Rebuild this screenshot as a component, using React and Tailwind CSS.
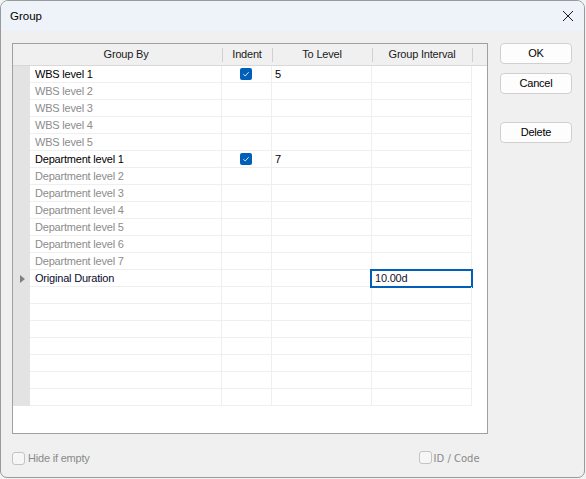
import React from "react";

const rows = [
  { name: "WBS level 1", on: true, indent: true, level: "5" },
  { name: "WBS level 2" },
  { name: "WBS level 3" },
  { name: "WBS level 4" },
  { name: "WBS level 5" },
  { name: "Department level 1", on: true, indent: true, level: "7" },
  { name: "Department level 2" },
  { name: "Department level 3" },
  { name: "Department level 4" },
  { name: "Department level 5" },
  { name: "Department level 6" },
  { name: "Department level 7" },
  { name: "Original Duration", on: true, current: true, interval: "10.00d" },
];
while (rows.length < 20) rows.push({ empty: true });

function Check() {
  return (
    <div className="w-[12px] h-[12px] rounded-[2px] bg-[#005fb8] flex items-center justify-center">
      <svg width="8" height="8" viewBox="0 0 8 8">
        <path d="M1.3 4.2 L3.2 6 L6.7 2.2" fill="none" stroke="#d4e4f4" strokeWidth="1" />
      </svg>
    </div>
  );
}

function Header({ w, children }) {
  return (
    <div className={`${w} relative flex items-center justify-center text-[#1a1a1a]`}>
      {children}
      <div className="absolute right-[-1px] top-[4px] h-[14px] w-px bg-[#d0d0d0]" />
    </div>
  );
}

export default function App() {
  return (
    <div className="w-[586px] h-[479px] bg-[#f3f3f3]">
      <div
        className="w-[585px] h-[478px] bg-[#f0f0f0] border border-[#9a9a9a] rounded-t-[8px] rounded-b-[7px] overflow-hidden flex flex-col text-[11px] tracking-[-0.2px] text-black"
        style={{ fontFamily: '"Liberation Sans", Arial, sans-serif' }}
      >
        <div className="h-[30px] bg-[#eef3f9] flex items-center justify-between pl-[9px] pr-[8px] shrink-0">
          <span className="text-[11.5px] tracking-normal mt-[1px]">Group</span>
          <svg width="12" height="12" viewBox="0 0 12 12" className="mr-[2px]">
            <path d="M1 1 L11 11 M11 1 L1 11" stroke="#1a1a1a" strokeWidth="1" />
          </svg>
        </div>
        <div className="flex pl-[11px] pt-[12px]">
          <div className="w-[476px] h-[391px] border border-[#a0a0a0] bg-white flex flex-col">
            <div className="h-[22px] bg-[#f0f0f0] flex border-b border-[#d8d8d8] shrink-0">
              <div className="w-[17px]" />
              <Header w="w-[192px]">Group By</Header>
              <Header w="w-[50px]">Indent</Header>
              <Header w="w-[100px]">To Level</Header>
              <Header w="w-[100px]">Group Interval</Header>
            </div>
            {rows.map((r, i) => (
              <div key={i} className="h-[17px] flex shrink-0">
                <div className="w-[17px] bg-[#e3e3e3] flex items-center justify-start pl-[7px]">
                  {r.current && (
                    <svg width="5" height="8" viewBox="0 0 5 8">
                      <path d="M0 0 L5 4 L0 8 Z" fill="#808080" />
                    </svg>
                  )}
                </div>
                <div
                  className={`w-[192px] border-r border-b border-[#efefef] pl-[5px] flex items-center leading-none ${
                    r.on ? (r.current ? "text-[#0a0a30]" : "text-black") : "text-[#8c8c8c]"
                  }`}
                >
                  {r.name || ""}
                </div>
                <div className="w-[50px] border-r border-b border-[#efefef] flex items-center justify-center pr-[1px]">
                  {r.indent && <Check />}
                </div>
                <div className="w-[100px] border-r border-b border-[#efefef] pl-[3px] flex items-center leading-none">
                  {r.level || ""}
                </div>
                <div className="w-[100px] border-r border-b border-[#efefef] flex items-center relative">
                  {r.interval && (
                    <div className="absolute left-[-2px] top-[-1px] w-[103px] h-[19px] border-2 border-[#005fb8] bg-white pl-[3px] flex items-center leading-none text-[#14142a]">
                      {r.interval}
                    </div>
                  )}
                </div>
              </div>
            ))}
          </div>
          <div className="flex flex-col pl-[12px]">
            <button className="w-[72px] h-[21px] bg-[#fdfdfd] border border-[#d0d0d0] rounded-[4px]">OK</button>
            <button className="w-[72px] h-[21px] bg-[#fdfdfd] border border-[#d0d0d0] rounded-[4px] mt-[9px]">Cancel</button>
            <button className="w-[72px] h-[21px] bg-[#fdfdfd] border border-[#d0d0d0] rounded-[4px] mt-[28px]">Delete</button>
          </div>
        </div>
        <div className="flex items-center pl-[11px] mt-[16px]">
          <div className="w-[13px] h-[13px] border border-[#c4c4c4] rounded-[3px] bg-[#f6f6f6]" />
          <span className="ml-[3px] text-[#8a8a8a]">Hide if empty</span>
          <div className="ml-[329px] w-[13px] h-[13px] border border-[#c4c4c4] rounded-[3px] bg-[#f6f6f6] -mt-[2px]" />
          <span className="ml-[2px] text-[#8a8a8a] tracking-normal" style={{ fontFamily: '"DejaVu Sans", sans-serif', fontSize: "10px" }}>ID / Code</span>
        </div>
      </div>
    </div>
  );
}
